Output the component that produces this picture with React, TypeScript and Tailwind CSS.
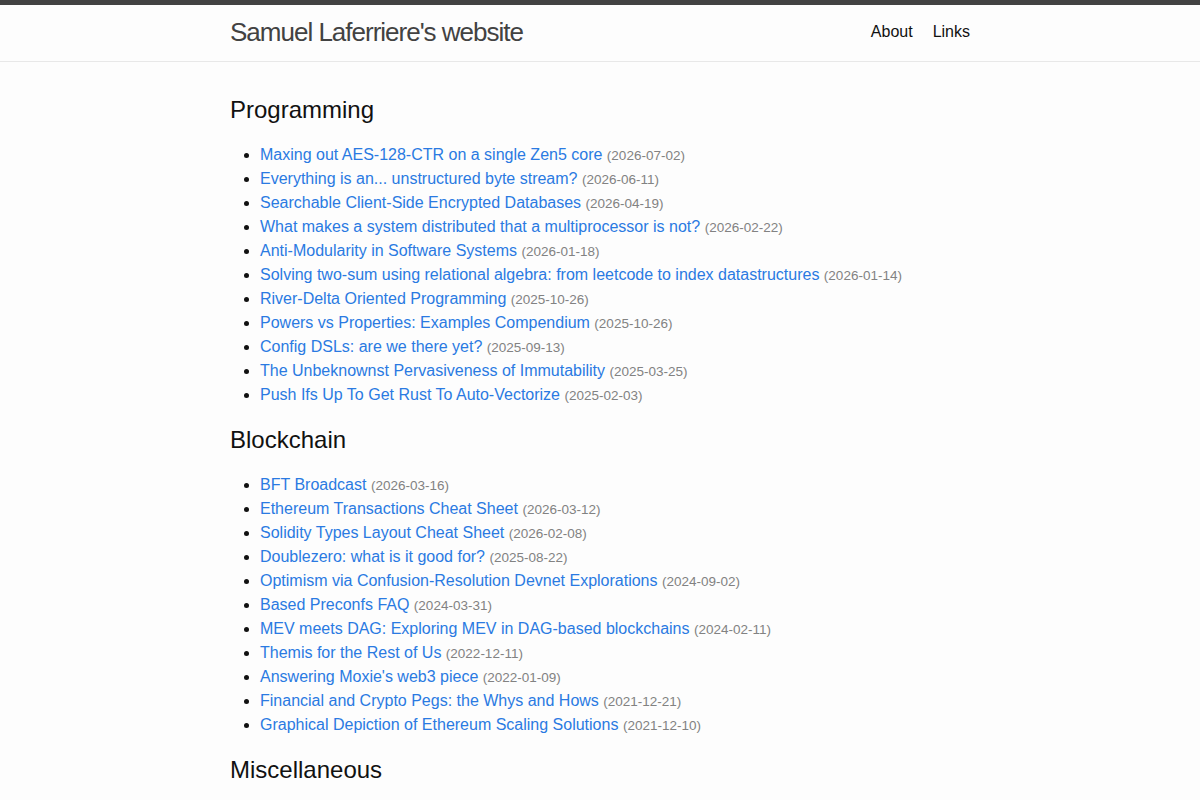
import React from 'react'

interface Post {
  title: string
  date: string
}

interface Section {
  name: string
  posts: Post[]
}

const sections: Section[] = [
  {
    name: 'Programming',
    posts: [
      { title: 'Maxing out AES-128-CTR on a single Zen5 core', date: '2026-07-02' },
      { title: 'Everything is an... unstructured byte stream?', date: '2026-06-11' },
      { title: 'Searchable Client-Side Encrypted Databases', date: '2026-04-19' },
      { title: 'What makes a system distributed that a multiprocessor is not?', date: '2026-02-22' },
      { title: 'Anti-Modularity in Software Systems', date: '2026-01-18' },
      { title: 'Solving two-sum using relational algebra: from leetcode to index datastructures', date: '2026-01-14' },
      { title: 'River-Delta Oriented Programming', date: '2025-10-26' },
      { title: 'Powers vs Properties: Examples Compendium', date: '2025-10-26' },
      { title: 'Config DSLs: are we there yet?', date: '2025-09-13' },
      { title: 'The Unbeknownst Pervasiveness of Immutability', date: '2025-03-25' },
      { title: 'Push Ifs Up To Get Rust To Auto-Vectorize', date: '2025-02-03' },
    ],
  },
  {
    name: 'Blockchain',
    posts: [
      { title: 'BFT Broadcast', date: '2026-03-16' },
      { title: 'Ethereum Transactions Cheat Sheet', date: '2026-03-12' },
      { title: 'Solidity Types Layout Cheat Sheet', date: '2026-02-08' },
      { title: 'Doublezero: what is it good for?', date: '2025-08-22' },
      { title: 'Optimism via Confusion-Resolution Devnet Explorations', date: '2024-09-02' },
      { title: 'Based Preconfs FAQ', date: '2024-03-31' },
      { title: 'MEV meets DAG: Exploring MEV in DAG-based blockchains', date: '2024-02-11' },
      { title: 'Themis for the Rest of Us', date: '2022-12-11' },
      { title: "Answering Moxie's web3 piece", date: '2022-01-09' },
      { title: 'Financial and Crypto Pegs: the Whys and Hows', date: '2021-12-21' },
      { title: 'Graphical Depiction of Ethereum Scaling Solutions', date: '2021-12-10' },
    ],
  },
  {
    name: 'Miscellaneous',
    posts: [],
  },
]

function Header() {
  return (
    <header className="border-t-[5px] border-b border-t-[#424242] border-b-[#e8e8e8] h-[62px]">
      <div className="max-w-[800px] mx-auto px-[30px] flex justify-between">
        <a href="#" className="text-[26px] leading-[54px] tracking-[-1px] text-[#424242]">
          Samuel Laferriere's website
        </a>
        <nav className="flex gap-5 leading-[54px] text-[#111]">
          <a href="#">About</a>
          <a href="#">Links</a>
        </nav>
      </div>
    </header>
  )
}

export default function App() {
  return (
    <div className="min-h-screen bg-[#fdfdfd] text-[#111] text-base leading-6 font-['Liberation_Sans',Arial,sans-serif]">
      <Header />
      <main className="max-w-[800px] mx-auto px-[30px] py-[30px]">
        {sections.map(section => (
          <div key={section.name}>
            <h2 className="text-2xl leading-9 mb-[15px]">{section.name}</h2>
            {section.posts.length > 0 && (
              <ul className="list-disc ml-[30px] mb-[15px]">
                {section.posts.map(post => (
                  <li key={post.title} className="h-6">
                    <a href="#" className="text-[#2a7ae2]">{post.title}</a>{' '}
                    <span className="text-[13.5px] leading-none text-[#828282]">({post.date})</span>
                  </li>
                ))}
              </ul>
            )}
          </div>
        ))}
      </main>
    </div>
  )
}
